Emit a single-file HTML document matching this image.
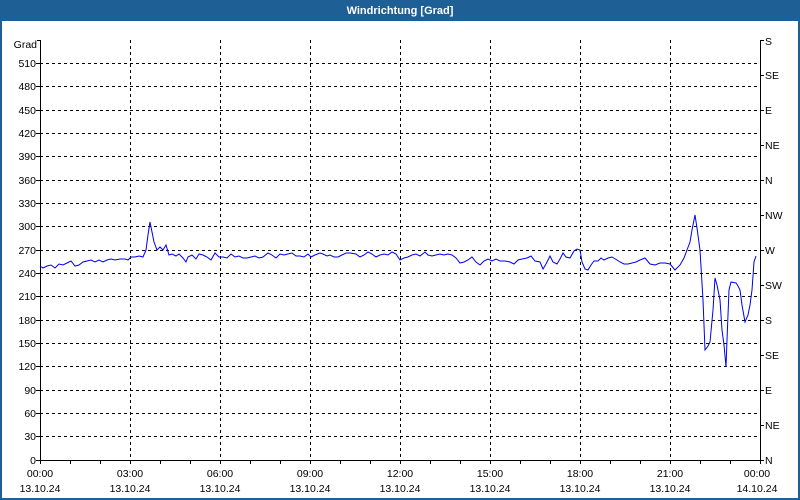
<!DOCTYPE html>
<html><head><meta charset="utf-8"><style>
html,body{margin:0;padding:0;width:800px;height:500px;overflow:hidden;background:#fff}
svg{display:block}
text{font-family:"Liberation Sans",sans-serif;font-size:10.5px;fill:#000}
</style></head><body>
<svg width="800" height="500" xmlns="http://www.w3.org/2000/svg">
<rect x="0" y="0" width="800" height="500" fill="#1e5f96"/>
<rect x="2" y="21" width="796" height="477" fill="#fff"/>
<text x="400" y="14" text-anchor="middle" style="fill:#fff;font-weight:bold;font-size:11px">Windrichtung [Grad]</text>
<g stroke="#000" stroke-width="1" stroke-dasharray="3,3" fill="none">
<path d="M40 436.5H760M40 413.5H760M40 390.5H760M40 366.5H760M40 343.5H760M40 320.5H760M40 296.5H760M40 273.5H760M40 250.5H760M40 226.5H760M40 203.5H760M40 180.5H760M40 156.5H760M40 133.5H760M40 110.5H760M40 86.5H760M40 63.5H760"/>
<path d="M130.5 40V460M220.5 40V460M310.5 40V460M400.5 40V460M490.5 40V460M580.5 40V460M670.5 40V460"/>
</g>
<g stroke="#000" stroke-width="1" fill="none">
<path d="M40.5 40V460.5H760.5V40"/>
<path d="M40.5 40.5H37M40 63.5H36M40 86.5H36M40 110.5H36M40 133.5H36M40 156.5H36M40 180.5H36M40 203.5H36M40 226.5H36M40 250.5H36M40 273.5H36M40 296.5H36M40 320.5H36M40 343.5H36M40 366.5H36M40 390.5H36M40 413.5H36M40 436.5H36M40 460.5H36"/>
<path d="M70.5 460V464M100.5 460V464M130.5 460V464M160.5 460V464M190.5 460V464M220.5 460V464M250.5 460V464M280.5 460V464M310.5 460V464M340.5 460V464M370.5 460V464M400.5 460V464M430.5 460V464M460.5 460V464M490.5 460V464M520.5 460V464M550.5 460V464M580.5 460V464M610.5 460V464M640.5 460V464M670.5 460V464M700.5 460V464M730.5 460V464M760.5 460V464M40.5 460V464"/>
<path d="M760 40.5H764M760 75.5H764M760 110.5H764M760 145.5H764M760 180.5H764M760 215.5H764M760 250.5H764M760 285.5H764M760 320.5H764M760 355.5H764M760 390.5H764M760 425.5H764M760 460.5H764"/>
</g>
<g text-anchor="end">
<text x="37" y="48">Grad</text>
<text x="36" y="67">510</text><text x="36" y="90">480</text><text x="36" y="114">450</text><text x="36" y="137">420</text><text x="36" y="160">390</text><text x="36" y="184">360</text><text x="36" y="207">330</text><text x="36" y="230">300</text><text x="36" y="254">270</text><text x="36" y="277">240</text><text x="36" y="300">210</text><text x="36" y="324">180</text><text x="36" y="347">150</text><text x="36" y="370">120</text><text x="36" y="394">90</text><text x="36" y="417">60</text><text x="36" y="440">30</text><text x="36" y="464">0</text>
</g>
<g>
<text x="765" y="45">S</text><text x="765" y="79">SE</text><text x="765" y="114">E</text><text x="765" y="149">NE</text><text x="765" y="184">N</text><text x="765" y="219">NW</text><text x="765" y="254">W</text><text x="765" y="289">SW</text><text x="765" y="324">S</text><text x="765" y="359">SE</text><text x="765" y="394">E</text><text x="765" y="429">NE</text><text x="765" y="464">N</text>
</g>
<g text-anchor="middle">
<text x="40" y="477">00:00</text><text x="130" y="477">03:00</text><text x="220" y="477">06:00</text><text x="310" y="477">09:00</text><text x="400" y="477">12:00</text><text x="490" y="477">15:00</text><text x="580" y="477">18:00</text><text x="670" y="477">21:00</text><text x="757" y="477">00:00</text>
<text x="40" y="492">13.10.24</text><text x="130" y="492">13.10.24</text><text x="220" y="492">13.10.24</text><text x="310" y="492">13.10.24</text><text x="400" y="492">13.10.24</text><text x="490" y="492">13.10.24</text><text x="580" y="492">13.10.24</text><text x="670" y="492">13.10.24</text><text x="757" y="492">14.10.24</text>
</g>
<polyline fill="none" stroke="#0000ee" stroke-width="1" points="40,266 43,268 47,266 51,265 55,268 59,264 63,265 67,263 71,261 75,266 79,265 83,262 87,261 91,260 95,262 99,260 103,262 107,260 111,259 115,260 120,259 125,259 128,260 131,257 135,257 139,256 143,257 146,250 148,235 150,222 152,232 154,242 157,250 160,247 163,250 166,245 169,255 172,254 176,256 179,254 183,258 186,262 188,257 192,255 196,259 199,254 203,255 207,257 211,260 215,253 219,257 223,257 227,258 231,254 235,257 239,256 243,258 247,258 251,257 255,256 259,258 263,257 268,253 272,255 276,258 280,254 284,255 288,254 292,253 296,256 300,256 304,257 308,254 311,257 315,255 320,253 323,254 327,256 330,255 334,257 338,257 342,255 346,253 350,253 356,254 360,257 364,255 368,252 372,254 376,257 380,255 384,254 388,255 392,252 396,254 400,260 404,258 408,257 412,255 416,254 420,256 425,252 428,255 432,256 436,255 440,254 444,255 448,254 452,255 456,258 460,263 464,262 468,260 472,257 476,262 480,265 484,261 488,259 492,261 496,259 500,261 505,261 510,262 514,264 518,260 522,259 527,258 531,256 535,261 540,262 543,269 546,264 550,256 553,262 557,264 560,259 563,253 566,257 570,258 574,251 577,249 580,250 582,262 585,269 588,270 591,265 594,261 598,261 601,258 604,260 608,258 612,257 617,260 620,262 624,264 628,264 632,263 636,262 640,260 645,258 650,264 655,265 660,263 665,263 670,264 675,270 680,265 684,258 687,250 690,242 692,230 695,215 697,228 700,250 703,300 705,350 708,346 710,342 713,310 715,278 717,285 720,300 722,330 724,345 726,367 727,340 729,290 731,282 736,283 738,286 740,290 742,305 745,322 748,315 750,305 752,290 754,262 756,256"/>
</svg>
</body></html>
